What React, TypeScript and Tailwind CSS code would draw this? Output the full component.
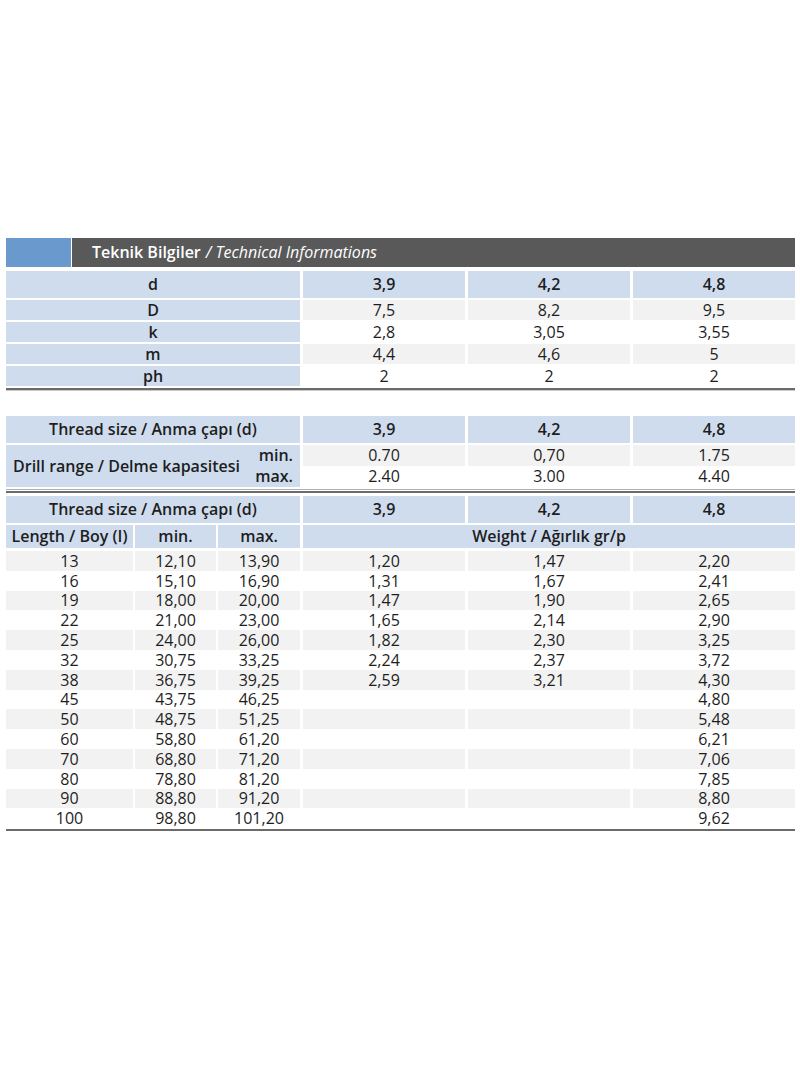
import React from "react";

const BLUE = "bg-[#cfdcee]";
const GRAY = "bg-[#f2f2f2]";

function Cell({ w, cls = "", children }: { w: string; cls?: string; children?: React.ReactNode }) {
  return <div className={`${w} shrink-0 flex items-center justify-center ${cls}`}>{children}</div>;
}

const t1 = [
  { l: "D", v: ["7,5", "8,2", "9,5"], bg: GRAY },
  { l: "k", v: ["2,8", "3,05", "3,55"], bg: "bg-white" },
  { l: "m", v: ["4,4", "4,6", "5"], bg: GRAY },
  { l: "ph", v: ["2", "2", "2"], bg: "bg-white" },
];

const data: [string, string, string, string, string, string][] = [
  ["13", "12,10", "13,90", "1,20", "1,47", "2,20"],
  ["16", "15,10", "16,90", "1,31", "1,67", "2,41"],
  ["19", "18,00", "20,00", "1,47", "1,90", "2,65"],
  ["22", "21,00", "23,00", "1,65", "2,14", "2,90"],
  ["25", "24,00", "26,00", "1,82", "2,30", "3,25"],
  ["32", "30,75", "33,25", "2,24", "2,37", "3,72"],
  ["38", "36,75", "39,25", "2,59", "3,21", "4,30"],
  ["45", "43,75", "46,25", "", "", "4,80"],
  ["50", "48,75", "51,25", "", "", "5,48"],
  ["60", "58,80", "61,20", "", "", "6,21"],
  ["70", "68,80", "71,20", "", "", "7,06"],
  ["80", "78,80", "81,20", "", "", "7,85"],
  ["90", "88,80", "91,20", "", "", "8,80"],
  ["100", "98,80", "101,20", "", "", "9,62"],
];

function HeadRow({ label, vals }: { label: string; vals: string[] }) {
  return (
    <div className="flex gap-[3px] h-[27px] font-semibold">
      <Cell w="w-[294px]" cls={BLUE}>{label}</Cell>
      {vals.map((v, i) => (
        <Cell key={i} w="w-[162px]" cls={BLUE}>{v}</Cell>
      ))}
    </div>
  );
}

function Rule() {
  return (
    <div className="flex flex-col">
      <div className="h-[2px] bg-[#6b6b6b]" />
      <div className="h-[1px] bg-[#c8c8c8]" />
    </div>
  );
}

export default function App() {
  return (
    <div
      className="w-[800px] h-[1066px] bg-white text-[#1e1e1e] text-[16px] leading-[19px] pt-[238px] pl-[6px]"
      style={{ fontFamily: '"Open Sans", "Noto Sans", sans-serif' }}
    >
      <div className="w-[789px] flex flex-col">
        {/* header */}
        <div className="flex h-[29px]">
          <div className="w-[65px] bg-[#6a9acd]" />
          <div className="w-[1px] bg-white" />
          <div className="flex-1 bg-[#595959] text-white flex items-center pl-[20px] text-[16px]">
            <span className="font-semibold">Teknik Bilgiler</span>
            <span className="italic ml-[5px]">/ Technical Informations</span>
          </div>
        </div>

        {/* table 1 */}
        <div className="mt-[4px] flex flex-col gap-[2px]">
          <HeadRow label="d" vals={["3,9", "4,2", "4,8"]} />
          {t1.map((r) => (
            <div key={r.l} className="flex gap-[3px] h-[20px]">
              <Cell w="w-[294px]" cls={`${BLUE} font-semibold`}>{r.l}</Cell>
              {r.v.map((v, i) => (
                <Cell key={i} w="w-[162px]" cls={r.bg}>{v}</Cell>
              ))}
            </div>
          ))}
        </div>
        <div className="mt-[2px]"><Rule /></div>

        {/* table 2 */}
        <div className="mt-[25px] flex flex-col gap-[2px]">
          <HeadRow label="Thread size / Anma çapı (d)" vals={["3,9", "4,2", "4,8"]} />
          <div className="flex gap-[3px] h-[42px]">
            <div className={`w-[294px] shrink-0 ${BLUE} flex items-center justify-between pl-[7px] pr-[7px] font-semibold`}>
              <span>Drill range / Delme kapasitesi</span>
              <div className="flex flex-col items-end leading-[21px]">
                <span>min.</span>
                <span>max.</span>
              </div>
            </div>
            {[["0.70", "2.40"], ["0,70", "3.00"], ["1.75", "4.40"]].map((p, i) => (
              <div key={i} className="w-[162px] shrink-0 flex flex-col">
                <div className={`h-[21px] ${GRAY} flex items-center justify-center`}>{p[0]}</div>
                <div className="h-[21px] flex items-center justify-center">{p[1]}</div>
              </div>
            ))}
          </div>
        </div>
        <div className="mt-[2px] flex flex-col">
          <div className="h-[1px] bg-[#b0b0b0]" />
          <div className="h-[1px] bg-white" />
          <div className="h-[2px] bg-[#6b6b6b]" />
        </div>

        {/* table 3 */}
        <div className="mt-[3px] flex flex-col gap-[2px]">
          <HeadRow label="Thread size / Anma çapı (d)" vals={["3,9", "4,2", "4,8"]} />
          <div className="flex gap-[3px] h-[23px] font-semibold">
            <div className="w-[294px] shrink-0 flex gap-[2px]">
              <Cell w="w-[127px]" cls={BLUE}>Length / Boy (I)</Cell>
              <Cell w="w-[81px]" cls={BLUE}>min.</Cell>
              <Cell w="w-[82px]" cls={BLUE}>max.</Cell>
            </div>
            <Cell w="w-[492px]" cls={BLUE}>Weight / Ağırlık gr/p</Cell>
          </div>
        </div>
        <div className="mt-[3px] flex flex-col leading-[16px]">
          {data.map((r, idx) => {
            const bg = idx % 2 === 0 ? GRAY : "bg-white";
            return (
              <div key={r[0]} className="flex gap-[3px] h-[19.8px]">
                <div className="w-[294px] shrink-0 flex gap-[2px]">
                  <Cell w="w-[127px]" cls={bg}>{r[0]}</Cell>
                  <Cell w="w-[81px]" cls={bg}>{r[1]}</Cell>
                  <Cell w="w-[82px]" cls={bg}>{r[2]}</Cell>
                </div>
                <Cell w="w-[162px]" cls={bg}>{r[3]}</Cell>
                <Cell w="w-[162px]" cls={bg}>{r[4]}</Cell>
                <Cell w="w-[162px]" cls={bg}>{r[5]}</Cell>
              </div>
            );
          })}
        </div>
        <div className="mt-[1px] h-[2px] bg-[#6b6b6b]" />
      </div>
    </div>
  );
}
